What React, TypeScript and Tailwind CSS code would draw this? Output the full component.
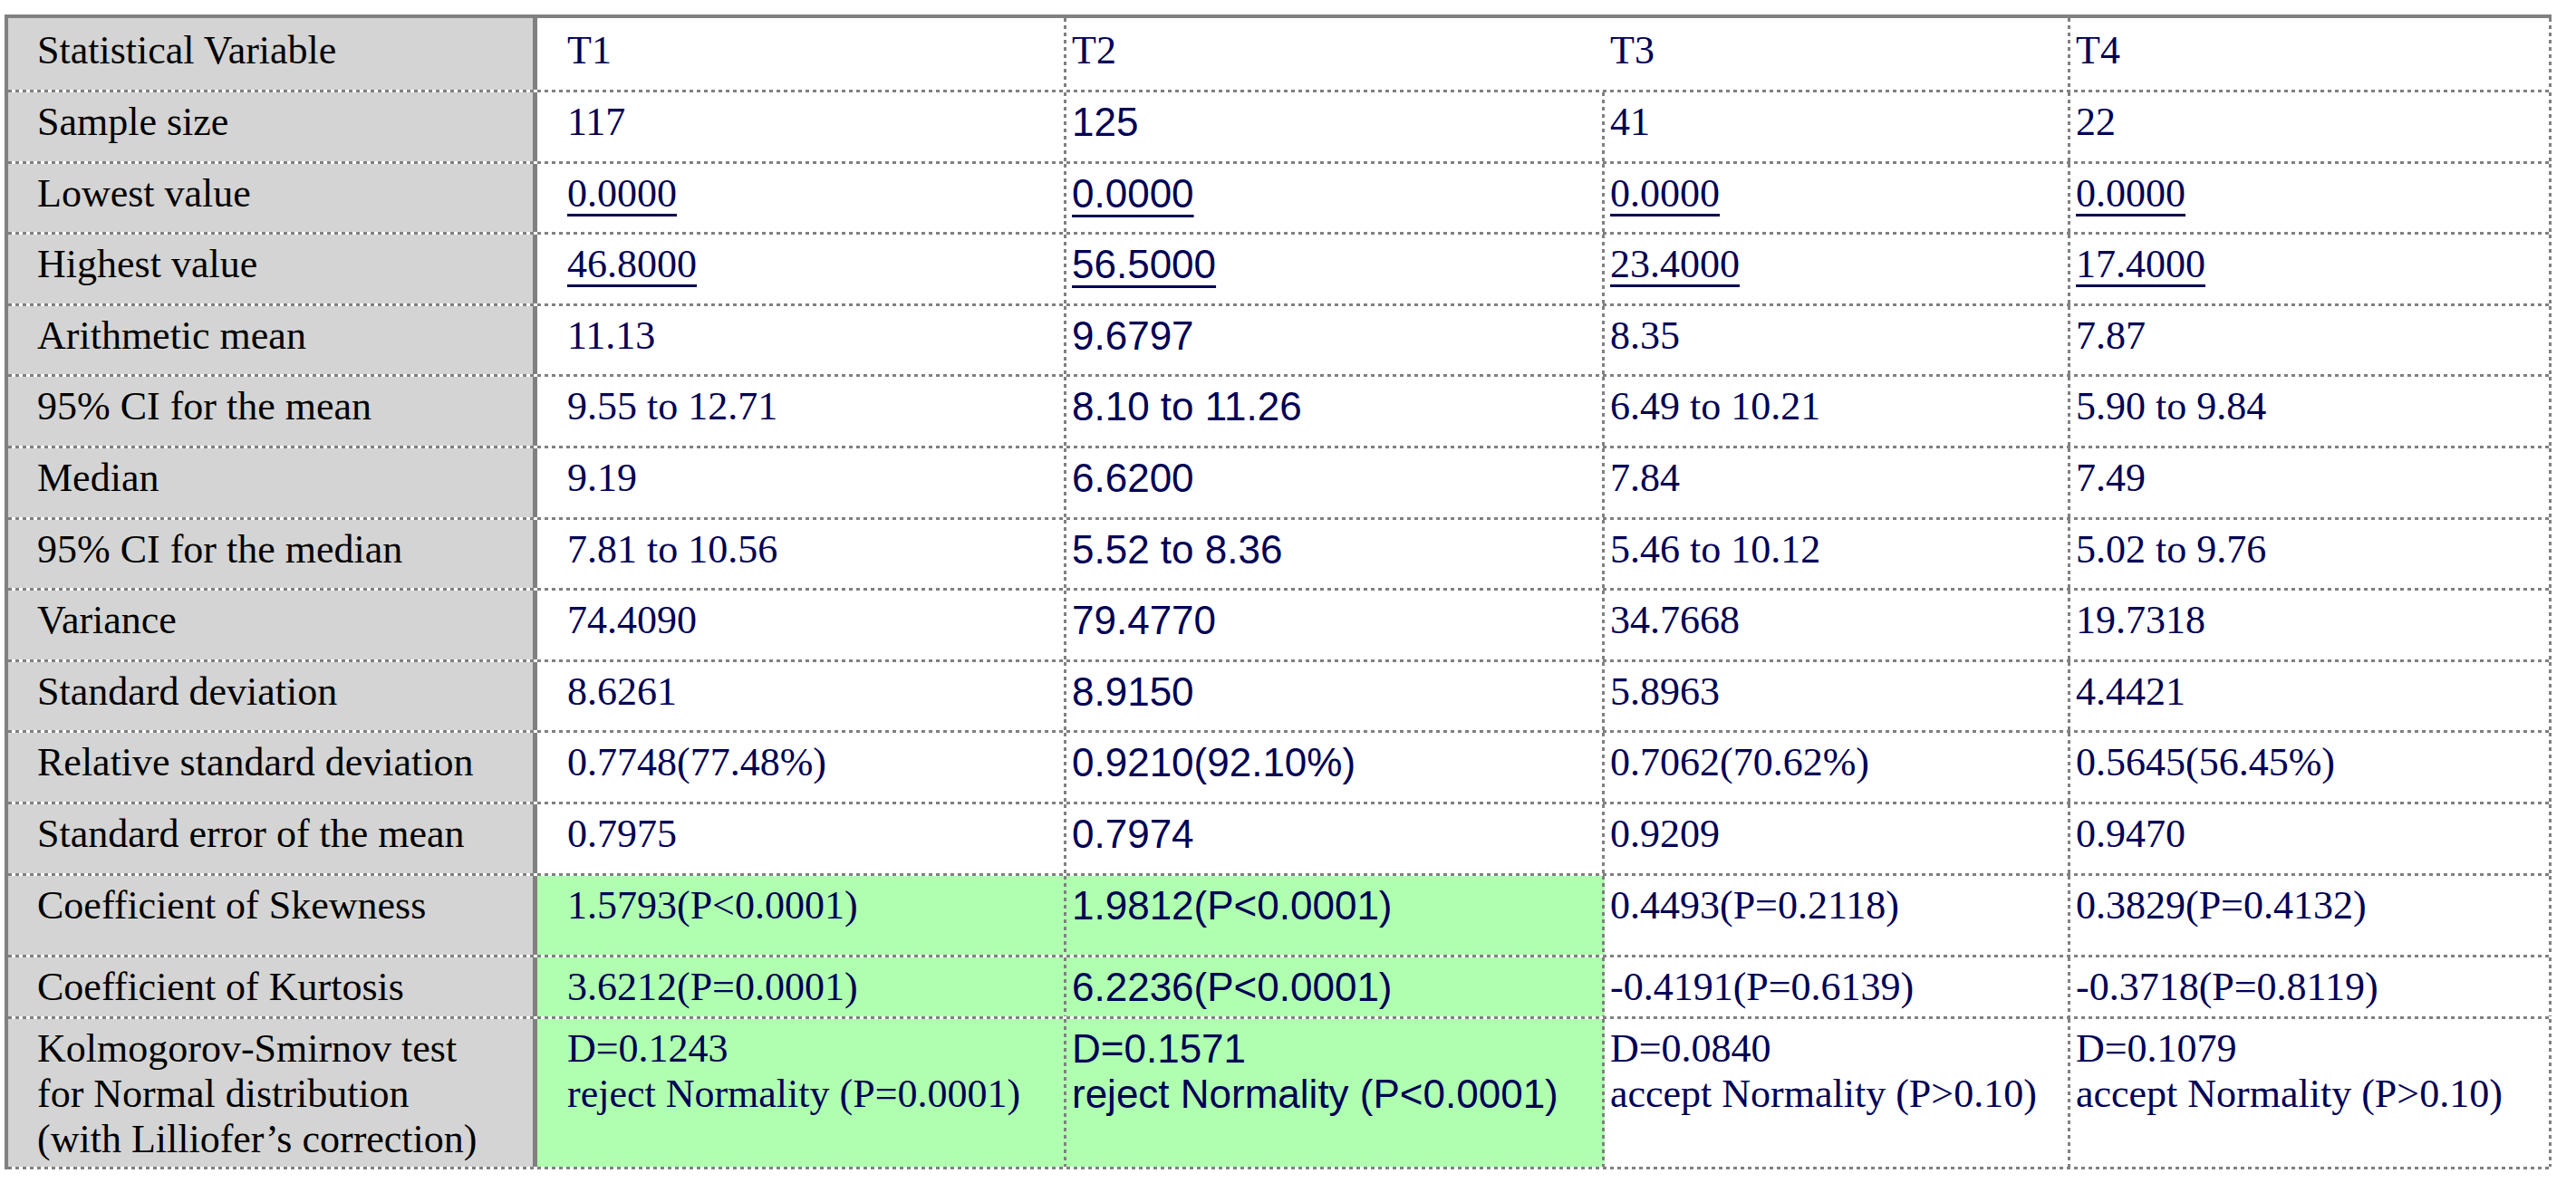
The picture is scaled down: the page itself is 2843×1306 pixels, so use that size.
type Row = {
  label: string[];
  values: string[][];
  link?: boolean;
  green?: boolean;
  h: string;
};

const serif = "font-['Liberation_Serif','Times_New_Roman',serif]";
const sans = "font-['Liberation_Sans',Arial,sans-serif]";

// dashed rules drawn with border-image so the dash length matches the screenshot
const hRule =
  "border-b-[3px] border-solid [border-image:repeating-linear-gradient(90deg,#808080_0_4px,transparent_4px_8px)_0_0_3_0]";
const vRule =
  "border-r-[3px] border-solid [border-image:repeating-linear-gradient(180deg,#808080_0_4px,transparent_4px_8px)_0_3_0_0]";

// column widths include the 3px right rule
const colW = ["w-[584px]", "w-[594px]", "w-[514px]", "w-[531px]"];
const colPad = ["pl-[33px]", "pl-[6px]", "pl-[6px]", "pl-[6px]"];

const rows: Row[] = [
  { label: ["Sample size"], values: [["117"], ["125"], ["41"], ["22"]], h: "h-[78.6px]" },
  { label: ["Lowest value"], values: [["0.0000"], ["0.0000"], ["0.0000"], ["0.0000"]], link: true, h: "h-[78.6px]" },
  { label: ["Highest value"], values: [["46.8000"], ["56.5000"], ["23.4000"], ["17.4000"]], link: true, h: "h-[78.6px]" },
  { label: ["Arithmetic mean"], values: [["11.13"], ["9.6797"], ["8.35"], ["7.87"]], h: "h-[78.6px]" },
  { label: ["95% CI for the mean"], values: [["9.55 to 12.71"], ["8.10 to 11.26"], ["6.49 to 10.21"], ["5.90 to 9.84"]], h: "h-[78.6px]" },
  { label: ["Median"], values: [["9.19"], ["6.6200"], ["7.84"], ["7.49"]], h: "h-[78.6px]" },
  { label: ["95% CI for the median"], values: [["7.81 to 10.56"], ["5.52 to 8.36"], ["5.46 to 10.12"], ["5.02 to 9.76"]], h: "h-[78.6px]" },
  { label: ["Variance"], values: [["74.4090"], ["79.4770"], ["34.7668"], ["19.7318"]], h: "h-[78.6px]" },
  { label: ["Standard deviation"], values: [["8.6261"], ["8.9150"], ["5.8963"], ["4.4421"]], h: "h-[78.6px]" },
  { label: ["Relative standard deviation"], values: [["0.7748(77.48%)"], ["0.9210(92.10%)"], ["0.7062(70.62%)"], ["0.5645(56.45%)"]], h: "h-[78.6px]" },
  { label: ["Standard error of the mean"], values: [["0.7975"], ["0.7974"], ["0.9209"], ["0.9470"]], h: "h-[78.6px]" },
  {
    label: ["Coefficient of Skewness"],
    values: [["1.5793(P<0.0001)"], ["1.9812(P<0.0001)"], ["0.4493(P=0.2118)"], ["0.3829(P=0.4132)"]],
    green: true,
    h: "h-[90px]",
  },
  {
    label: ["Coefficient of Kurtosis"],
    values: [["3.6212(P=0.0001)"], ["6.2236(P<0.0001)"], ["-0.4191(P=0.6139)"], ["-0.3718(P=0.8119)"]],
    green: true,
    h: "h-[68px]",
  },
  {
    label: ["Kolmogorov-Smirnov test", "for Normal distribution", "(with Lilliofer\u2019s correction)"],
    values: [
      ["D=0.1243", "reject Normality (P=0.0001)"],
      ["D=0.1571", "reject Normality (P<0.0001)"],
      ["D=0.0840", "accept Normality (P>0.10)"],
      ["D=0.1079", "accept Normality (P>0.10)"],
    ],
    green: true,
    h: "h-[166px]",
  },
];

function Lines({ lines, link }: { lines: string[]; link?: boolean }) {
  return (
    <>
      {lines.map((l, i) => (
        <div key={i} className="whitespace-nowrap">
          <span className={link ? "underline decoration-[3px] underline-offset-[8px]" : ""}>{l}</span>
        </div>
      ))}
    </>
  );
}

export default function App() {
  return (
    <div className="bg-white w-[2843px] h-[1306px] pt-[16px] pl-[5px]">
      <div className="w-[2811px] border-t-4 border-l-4 border-solid border-[#808080] text-[44px] leading-[50px]">
        {/* Header */}
        <div className={`flex h-[82px] ${hRule}`}>
          <div className={`w-[584px] shrink-0 bg-[#d4d4d4] border-r-[5px] border-solid border-[#808080] pl-[32px] pt-[11px] text-black ${serif}`}>
            Statistical Variable
          </div>
          {["T1", "T2", "T3", "T4"].map((t, i) => (
            <div
              key={t}
              className={`${colW[i]} ${colPad[i]} shrink-0 pt-[11px] text-[#000055] ${serif} ${
                i === 1 ? "border-r-[3px] border-solid border-transparent" : vRule
              }`}
            >
              {t}
            </div>
          ))}
        </div>

        {rows.map((r, ri) => (
          <div key={ri} className={`flex ${r.h} ${hRule}`}>
            <div className={`w-[584px] shrink-0 bg-[#d4d4d4] border-r-[5px] border-solid border-[#808080] pl-[32px] pt-[8px] text-black ${serif}`}>
              <Lines lines={r.label} />
            </div>
            {r.values.map((v, i) => (
              <div
                key={i}
                className={`${colW[i]} ${colPad[i]} shrink-0 pt-[8px] ${vRule} text-[#000055] ${
                  i === 1 ? sans : serif
                } ${r.green && i < 2 ? "bg-[#b0ffb0]" : ""}`}
              >
                <Lines lines={v} link={r.link} />
              </div>
            ))}
          </div>
        ))}
      </div>
    </div>
  );
}
